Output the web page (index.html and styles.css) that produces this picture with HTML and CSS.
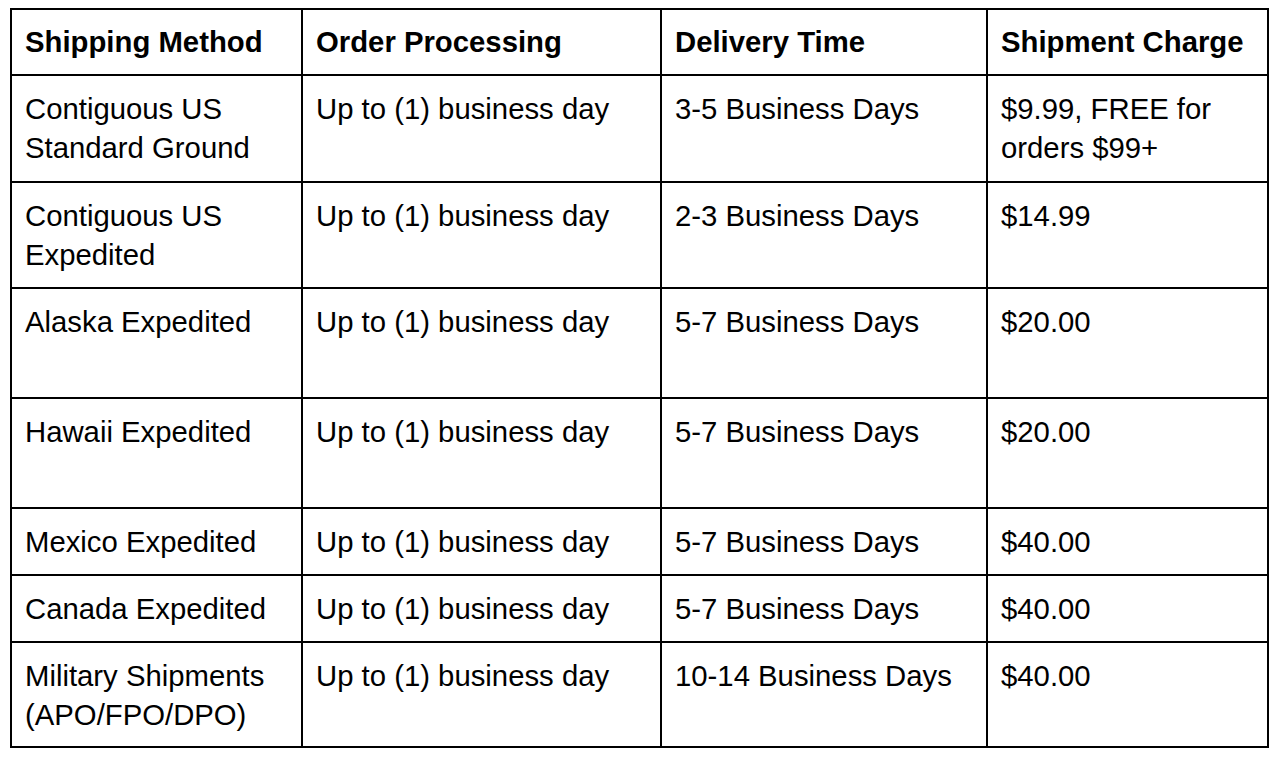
FILE: index.html
```html
<!DOCTYPE html>
<html>
<head>
<meta charset="utf-8">
<link rel="stylesheet" href="styles.css">
</head>
<body>
<div class="page">
<table class="ship">
<colgroup>
<col class="c1"><col class="c2"><col class="c3"><col class="c4">
</colgroup>
<thead>
<tr class="h-head"><th>Shipping Method</th><th>Order Processing</th><th>Delivery Time</th><th>Shipment Charge</th></tr>
</thead>
<tbody>
<tr class="h-107"><td>Contiguous US<br>Standard Ground</td><td>Up to (1) business day</td><td>3-5 Business Days</td><td>$9.99, FREE for<br>orders $99+</td></tr>
<tr class="h-106"><td>Contiguous US<br>Expedited</td><td>Up to (1) business day</td><td>2-3 Business Days</td><td>$14.99</td></tr>
<tr class="h-110"><td>Alaska Expedited</td><td>Up to (1) business day</td><td>5-7 Business Days</td><td>$20.00</td></tr>
<tr class="h-110"><td>Hawaii Expedited</td><td>Up to (1) business day</td><td>5-7 Business Days</td><td>$20.00</td></tr>
<tr class="h-67"><td>Mexico Expedited</td><td>Up to (1) business day</td><td>5-7 Business Days</td><td>$40.00</td></tr>
<tr class="h-67"><td>Canada Expedited</td><td>Up to (1) business day</td><td>5-7 Business Days</td><td>$40.00</td></tr>
<tr class="h-105"><td>Military Shipments<br>(APO/FPO/DPO)</td><td>Up to (1) business day</td><td>10-14 Business Days</td><td>$40.00</td></tr>
</tbody>
</table>
</div>
</body>
</html>
```
FILE: styles.css
```css
html, body {
  margin: 0;
  padding: 0;
  background: #fff;
}
.page {
  padding: 8px 0 0 10px;
}
.ship {
  border-collapse: collapse;
  table-layout: fixed;
  width: 1257px;
  font-family: "Liberation Sans", Arial, sans-serif;
  font-size: 29.3px;
  line-height: 39px;
  color: #000;
}
.c1 { width: 291px; }
.c2 { width: 359px; }
.c3 { width: 326px; }
.c4 { width: 281px; }
.ship th, .ship td {
  border: 2px solid #000;
  padding: 13px 12px 0 13px;
  vertical-align: top;
  text-align: left;
  box-sizing: border-box;
}
.ship th {
  font-weight: bold;
  padding-top: 12px;
}
.h-head { height: 66px; }
.h-107 { height: 107px; }
.h-106 { height: 106px; }
.h-110 { height: 110px; }
.h-67 { height: 67px; }
.h-105 { height: 105px; }
```
